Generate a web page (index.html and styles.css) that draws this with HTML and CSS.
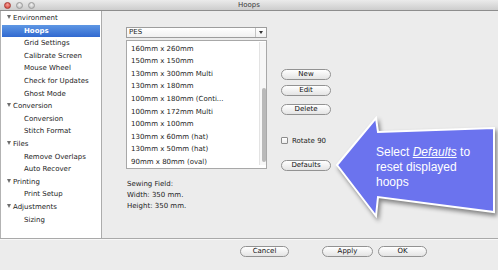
FILE: index.html
```html
<!DOCTYPE html>
<html lang="en">
<head>
    <meta charset="UTF-8">
    <title>Hoops</title>
    <link rel="stylesheet" href="styles.css">
</head>
<body>
    <div class="window">
        <div class="titlebar">
            <div class="lights">
                <span class="light red"></span>
                <span class="light"></span>
                <span class="light"></span>
            </div>
            <div class="title">Hoops</div>
            <div></div>
        </div>

        <div class="main">
            <ul class="sidebar">
                <li class="group"><span class="disclosure"></span>Environment</li>
                <li class="item selected">Hoops</li>
                <li class="item">Grid Settings</li>
                <li class="item">Calibrate Screen</li>
                <li class="item">Mouse Wheel</li>
                <li class="item">Check for Updates</li>
                <li class="item">Ghost Mode</li>
                <li class="group"><span class="disclosure"></span>Conversion</li>
                <li class="item">Conversion</li>
                <li class="item">Stitch Format</li>
                <li class="group"><span class="disclosure"></span>Files</li>
                <li class="item">Remove Overlaps</li>
                <li class="item">Auto Recover</li>
                <li class="group"><span class="disclosure"></span>Printing</li>
                <li class="item">Print Setup</li>
                <li class="group"><span class="disclosure"></span>Adjustments</li>
                <li class="item">Sizing</li>
            </ul>

            <div class="content">
                <div class="hoop-col">
                    <div class="popup">
                        <span class="popup-value">PES</span>
                        <span class="popup-arrow"><span class="tri"></span></span>
                    </div>
                    <div class="list">
                        <ul class="list-items">
                            <li>160mm x 260mm</li>
                            <li>150mm x 150mm</li>
                            <li>130mm x 300mm Multi</li>
                            <li>130mm x 180mm</li>
                            <li>100mm x 180mm (Conti...</li>
                            <li>100mm x 172mm Multi</li>
                            <li>100mm x 100mm</li>
                            <li>130mm x 60mm (hat)</li>
                            <li>130mm x 50mm (hat)</li>
                            <li>90mm x 80mm (oval)</li>
                        </ul>
                        <div class="scrollbar"><div class="thumb"></div></div>
                    </div>
                    <div class="field-info">
                        Sewing Field:<br>
                        Width: 350 mm.<br>
                        Height: 350 mm.
                    </div>
                </div>

                <div class="btn-col">
                    <button class="btn btn-new">New</button>
                    <button class="btn btn-edit">Edit</button>
                    <button class="btn btn-delete">Delete</button>
                    <label class="check"><span class="box"></span>Rotate 90</label>
                    <button class="btn btn-defaults">Defaults</button>
                </div>
            </div>
        </div>

        <div class="footer">
            <button class="btn btn-cancel">Cancel</button>
            <button class="btn btn-apply">Apply</button>
            <button class="btn btn-ok">OK</button>
        </div>

        <!-- callout arrow drawn over the dialog -->
        <div class="callout">
            <svg width="170" height="118" viewBox="0 0 170 118">
                <polygon points="7,55 46,8 48,22 164,18 164,102 48,87 46,106" fill="#6b73ee" stroke="#ffffff" stroke-width="2" stroke-linejoin="miter"/>
            </svg>
            <div class="callout-text">Select <i>Defaults</i> to<br>reset displayed<br>hoops</div>
        </div>
    </div>
</body>
</html>
```

FILE: styles.css
```css
* {
    box-sizing: border-box;
}

body {
    margin: 0;
    padding: 0;
    overflow: hidden;
    background-color: #ececec;
}

.window {
    position: relative;
    width: 498px;
    height: 270px;
    display: flex;
    flex-direction: column;
    background-color: #ececec;
    font-family: 'DejaVu Sans', sans-serif;
    font-size: 7px;
    color: #1c1c1c;
    overflow: hidden;
}

/* title bar */
.titlebar {
    height: 11px;
    flex: 0 0 11px;
    display: grid;
    grid-template-columns: 1fr auto 1fr;
    align-items: center;
    background: linear-gradient(#ebebeb, #cdcdcd);
    border-bottom: 1px solid #8d8d8d;
}

.lights {
    display: flex;
    gap: 5px;
    padding-left: 4px;
}

.light {
    width: 7px;
    height: 7px;
    border-radius: 50%;
    background: radial-gradient(circle at 50% 35%, #f2f2f2, #b4b4b4);
    border: 1px solid #9a9a9a;
}

.light.red {
    background: radial-gradient(circle at 50% 35%, #f7a39c, #d2382f);
    border-color: #a83a33;
}

.title {
    color: #3a3a3a;
    line-height: 10px;
}

/* body */
.main {
    flex: 0 0 227px;
    display: flex;
}

.sidebar {
    list-style: none;
    margin: 0;
    padding: 1px 0 0 0;
    width: 102px;
    flex: 0 0 102px;
    background-color: #ffffff;
    border-left: 1px solid #b3b3b3;
    border-right: 1px solid #acacac;
}

.sidebar li {
    height: 12.6px;
    line-height: 12.6px;
    white-space: nowrap;
}

.sidebar .group {
    padding-left: 6px;
}

.disclosure {
    display: inline-block;
    width: 0;
    height: 0;
    margin-right: 2px;
    vertical-align: 1px;
    border-left: 2.5px solid transparent;
    border-right: 2.5px solid transparent;
    border-top: 4px solid #6e6e6e;
}

.sidebar .item {
    padding-left: 23px;
}

.sidebar .selected {
    margin: 0 1px;
    padding-left: 22px;
    background: linear-gradient(#5e97e4, #3169d0);
    color: #ffffff;
    font-weight: bold;
}

.content {
    display: flex;
    gap: 14px;
    padding: 16px 0 0 24px;
}

.hoop-col {
    width: 141px;
}

.popup {
    height: 11px;
    display: flex;
    background: linear-gradient(#ffffff, #f1f1f1);
    border: 1px solid #9d9d9d;
}

.popup-value {
    flex: 1;
    padding-left: 2px;
    line-height: 9px;
}

.popup-arrow {
    width: 11px;
    display: flex;
    align-items: center;
    justify-content: center;
    border-left: 1px solid #c4c4c4;
}

.tri {
    width: 0;
    height: 0;
    border-left: 2px solid transparent;
    border-right: 2px solid transparent;
    border-top: 3px solid #333333;
}

.list {
    margin-top: 2px;
    height: 129px;
    display: flex;
    background-color: #ffffff;
    border: 1px solid #a8a8a8;
}

.list-items {
    flex: 1;
    list-style: none;
    margin: 0;
    padding: 1.6px 0 0 4px;
}

.list-items li {
    height: 12.6px;
    line-height: 12.6px;
    white-space: nowrap;
}

.scrollbar {
    width: 7px;
    margin: 1px 0 3px 0;
    padding: 46px 1px 0 2px;
    background-color: #f7f7f7;
    border-left: 1px solid #e3e3e3;
}

.thumb {
    width: 4px;
    height: 74px;
    border-radius: 2px;
    background-color: #b9b9b9;
}

.field-info {
    margin-top: 10px;
    padding-left: 1px;
    line-height: 11px;
}

/* buttons */
.btn {
    display: block;
    height: 11px;
    padding: 0;
    border: 1px solid #929292;
    border-radius: 6px;
    background: linear-gradient(#ffffff, #e4e4e4);
    font-family: 'DejaVu Sans', sans-serif;
    font-size: 7px;
    line-height: 9px;
    color: #111111;
    text-align: center;
}

.btn-col {
    width: 50px;
    display: flex;
    flex-direction: column;
}

.btn-col .btn {
    width: 50px;
}

.btn-new {
    margin-top: 42px;
}

.btn-edit {
    margin-top: 5px;
}

.btn-delete {
    margin-top: 8px;
}

.check {
    display: flex;
    align-items: center;
    gap: 4px;
    margin-top: 21px;
    height: 9px;
    white-space: nowrap;
}

.box {
    width: 7px;
    height: 7px;
    border: 1px solid #8c8c8c;
    border-radius: 1px;
    background: linear-gradient(#ffffff, #ececec);
}

.btn-defaults {
    margin-top: 15px;
}

.footer {
    flex: 1;
    display: flex;
    align-items: flex-start;
    padding: 7px 0 0 240px;
    border-top: 1px solid #a9a9a9;
    box-shadow: inset 0 1px 0 #f8f8f8;
}

.btn-cancel {
    width: 49px;
}

.btn-apply {
    width: 51px;
    margin-left: 33px;
}

.btn-ok {
    width: 49px;
    margin-left: 5px;
}

/* annotation */
.callout {
    position: absolute;
    left: 330px;
    top: 110px;
    width: 170px;
    height: 118px;
}

.callout svg {
    display: block;
    filter: drop-shadow(2px 3px 2px rgba(0, 0, 0, 0.45));
}

.callout-text {
    position: absolute;
    left: 46px;
    top: 35px;
    font-family: 'Liberation Sans', Arial, sans-serif;
    font-size: 12px;
    line-height: 15px;
    color: #ffffff;
    white-space: nowrap;
}

.callout-text i {
    text-decoration: underline;
}
```
